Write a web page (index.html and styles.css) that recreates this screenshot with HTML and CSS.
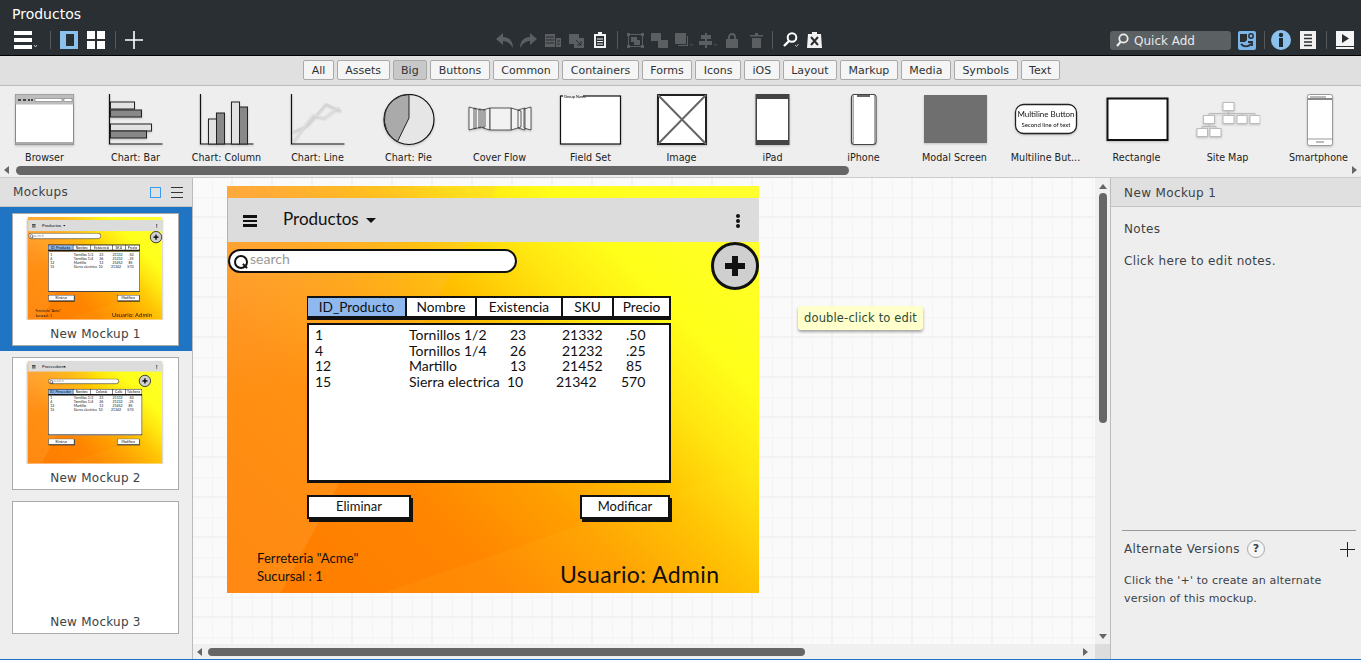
FILE: index.html
```html
<!DOCTYPE html>
<html lang="es">
<head>
    <meta charset="UTF-8">
    <title>Productos</title>
    <link rel="stylesheet" href="styles.css">
</head>
<body>
<div class="app">
    <header class="topbar">
        <div class="doc-title">Productos</div>
        <div class="tools">
            <div class="tool-group">
                <svg width="24" height="18" viewBox="0 0 24 18"><path d="M0 0h18v4H0zM0 7h18v4H0zM0 14h18v4H0z" fill="#fff"/><path d="M20 14l1.500 2 1.500-2" fill="none" stroke="#ddd" stroke-width=".8"/></svg>
                <i class="sep first"></i>
                <svg width="18" height="18" viewBox="0 0 18 18"><path d="M0 0h18v18H0z M6 3v12h8V3z" fill="#8cc1ee" fill-rule="evenodd"/></svg>
                <svg width="18" height="18" viewBox="0 0 18 18" class="grid-icon"><path d="M0 0h8v8H0zM10 0h8v8h-8zM0 10h8v8H0zM10 10h8v8h-8z" fill="#fff"/></svg>
                <i class="sep second"></i>
                <svg width="18" height="18" viewBox="0 0 18 18"><path d="M9 0v18M0 9h18" stroke="#fff" stroke-width="1.600"/></svg>
            </div>
            <div class="tool-mid">
                <svg width="24" height="15" viewBox="0 0 24 15"><path d="M7 0L0 6l7 6V8c4 0 7 2 10 7 0-6-3-11-10-11z" fill="#5b5f62"/></svg>
                <svg width="25" height="15" viewBox="0 0 25 15"><path d="M10 0l7 6-7 6V8c-4 0-7 2-10 7 0-6 3-11 10-11z" fill="#5b5f62"/></svg>
                <svg width="24" height="15" viewBox="0 0 24 15"><path d="M0 1h10v13H0zM11 5h5v9h-5z" fill="#5b5f62"/><path d="M1 4h8M1 7h8M1 10h8M12 8h3M12 11h3" stroke="#2a2f33"/></svg>
                <svg width="25" height="15" viewBox="0 0 25 15"><path d="M0 1h10v10H0zM5 5h10v10H5z" fill="#5b5f62"/><path d="M7 7l5 5M8 12h4V8" stroke="#2a2f33" fill="none"/></svg>
                <svg width="23" height="16" viewBox="0 0 23 16"><path d="M0 2h4V0h4v2h4v14H0z" fill="#f2f2f2"/><path d="M2 4h8v10H2z" fill="#2a2f33"/><path d="M3 7h6M3 9.500h6M3 12h6" stroke="#f2f2f2"/></svg>
                <i class="sep"></i>
                <svg width="24" height="15" viewBox="0 0 24 15"><path d="M1.500 1.500h14v12h-14z" fill="none" stroke="#5b5f62"/><path d="M0 0h3v3H0zM14 0h3v3h-3zM0 12h3v3H0zM14 12h3v3h-3z" fill="#5b5f62"/><path d="M4 4h6v3h3v5H7V9H4z" fill="#5b5f62"/></svg>
                <svg width="24" height="15" viewBox="0 0 24 15"><path d="M0 0h10v8H0zM7 7h10v8H7z" fill="#5b5f62"/></svg>
                <svg width="24" height="15" viewBox="0 0 24 15"><path d="M0 0h11v11H0z" fill="#5b5f62"/><path d="M12 3h1v10H3v-1h9z" fill="#5b5f62"/><path d="M15 11l1.500 1.500L18 11" stroke="#5b5f62" fill="none" stroke-width=".8"/></svg>
                <svg width="27" height="15" viewBox="0 0 27 15"><path d="M6 0h2v15H6zM2 2h10v4H2zM0 8h13v4H0z" fill="#5b5f62"/><path d="M15 11l1.500 1.500L18 11" stroke="#5b5f62" fill="none" stroke-width=".8"/></svg>
                <svg width="24" height="15" viewBox="0 0 24 15"><path d="M0 6h12v9H0z" fill="#5b5f62"/><path d="M3 6V4a3 3 0 0 1 6 0v2" fill="none" stroke="#5b5f62" stroke-width="1.800"/></svg>
                <svg width="22" height="15" viewBox="0 0 22 15"><path d="M0 2h13v1.500H0zM5 0h3v2H5zM2 5h9v10H2z" fill="#5b5f62"/></svg>
                <i class="sep wide"></i>
                <svg width="24" height="16" viewBox="0 0 24 16"><circle cx="9" cy="5.500" r="4.300" fill="none" stroke="#fff" stroke-width="2"/><path d="M6 9l-5 5" stroke="#fff" stroke-width="2.400"/><path d="M12 13l1.500 1.500L15.500 12" stroke="#ddd" fill="none" stroke-width=".8"/></svg>
                <svg width="15" height="16" viewBox="0 0 15 16"><path d="M1 2h4V0h5v2h4l1 14H0z" fill="#f2f2f2"/><path d="M4 5l7 8M11 5l-7 8" stroke="#2a2f33" stroke-width="2"/></svg>
            </div>
            <div class="tool-right">
                <div class="quick-add">
                    <svg width="13" height="14" viewBox="0 0 13 14"><circle cx="7.500" cy="5.500" r="4.200" fill="none" stroke="#eee" stroke-width="1.800"/><path d="M4.500 9L1 13" stroke="#eee" stroke-width="2"/></svg>
                    <span>Quick Add</span>
                </div>
                <svg width="18" height="19" viewBox="0 0 18 19"><rect width="18" height="19" rx="2" fill="#7ab6ea"/><path d="M2 3h7v6l-2 2H2z" fill="#2a2f33"/><circle cx="13" cy="5" r="2.200" fill="none" stroke="#2a2f33" stroke-width="1.500"/><path d="M3 13c3 3 7 3 10 0M10 11h4v4" stroke="#2a2f33" stroke-width="1.800" fill="none"/></svg>
                <i class="sep s-info"></i>
                <svg width="20" height="20" viewBox="0 0 20 20"><circle cx="10" cy="10" r="10" fill="#8cc1ee"/><path d="M8 8h4v9H8z" fill="#1f2a33"/><circle cx="10" cy="5" r="2.200" fill="#1f2a33"/></svg>
                <svg width="16" height="18" viewBox="0 0 16 18" class="doc-icon"><rect width="16" height="18" fill="#f2f2f2"/><path d="M4 4h8M4 7.500h8M4 11h8M4 14.500h8" stroke="#2a2f33" stroke-width="1.600"/></svg>
                <i class="sep s-play"></i>
                <svg width="18" height="18" viewBox="0 0 18 18"><path d="M0 0h18v15H0zM0 16h18v2H0z" fill="#f5f5f5"/><path d="M6 3l7 4.500-7 4.500z" fill="#2a2f33"/></svg>
            </div>
        </div>
    </header>

    <nav class="filters">
        <button class="filter">All</button>
        <button class="filter">Assets</button>
        <button class="filter active">Big</button>
        <button class="filter">Buttons</button>
        <button class="filter">Common</button>
        <button class="filter">Containers</button>
        <button class="filter">Forms</button>
        <button class="filter">Icons</button>
        <button class="filter">iOS</button>
        <button class="filter">Layout</button>
        <button class="filter">Markup</button>
        <button class="filter">Media</button>
        <button class="filter">Symbols</button>
        <button class="filter">Text</button>
    </nav>

    <section class="library">
        <div class="lib-items">
            <div class="lib-item">
                <svg width="64" height="54" viewBox="0 0 64 54"><rect x="2.500" y=".5" width="58" height="50" fill="#fff" stroke="#888"/><rect x="2.500" y=".5" width="58" height="10" fill="#bdbdbd"/><path d="M5 6h3M10 6h3M15 6h2M18 6h2" stroke="#444" stroke-width="2"/><rect x="22" y="4.500" width="27" height="3" fill="#fff" stroke="#666" stroke-width=".5"/><rect x="51" y="4.500" width="8" height="3" fill="#fff" stroke="#666" stroke-width=".5"/><rect x="2.500" y="48" width="58" height="2.500" fill="#aaa"/></svg>
                <span>Browser</span>
            </div>
            <div class="lib-item">
                <svg width="64" height="54" viewBox="0 0 64 54"><path d="M5.500 0v50h53" fill="none" stroke="#111" stroke-width="1.200"/><rect x="6.500" y="8" width="24" height="7" fill="#e2e2e2" stroke="#222"/><rect x="6.500" y="16" width="31" height="7" fill="#888" stroke="#222"/><rect x="6.500" y="30" width="41" height="7" fill="#e2e2e2" stroke="#222"/><rect x="6.500" y="37" width="36" height="7" fill="#888" stroke="#222"/></svg>
                <span>Chart: Bar</span>
            </div>
            <div class="lib-item">
                <svg width="64" height="54" viewBox="0 0 64 54"><path d="M5.500 0v50h53" fill="none" stroke="#111" stroke-width="1.200"/><rect x="13.500" y="25" width="8" height="25" fill="#e2e2e2" stroke="#222"/><rect x="21.500" y="19" width="8" height="31" fill="#888" stroke="#222"/><rect x="36.500" y="8" width="8" height="42" fill="#e2e2e2" stroke="#222"/><rect x="44.500" y="13" width="8" height="37" fill="#888" stroke="#222"/></svg>
                <span>Chart: Column</span>
            </div>
            <div class="lib-item">
                <svg width="64" height="54" viewBox="0 0 64 54"><path d="M5.500 0v50h53" fill="none" stroke="#111" stroke-width="1.200"/><path d="M7 38l15-7L40 10l15 7" fill="none" stroke="#d4d4d4" stroke-width="1.500"/><path d="M7 48l20-27 11 3 15-11" fill="none" stroke="#dedede" stroke-width="1.500"/></svg>
                <span>Chart: Line</span>
            </div>
            <div class="lib-item">
                <svg width="64" height="54" viewBox="0 0 64 54"><circle cx="32" cy="25.500" r="25" fill="#e6e6e6" stroke="#111" stroke-width="1.200"/><path d="M32 .5A25 25 0 0 0 20.500 47.500L32 24z" fill="#aaa" stroke="#222"/></svg>
                <span>Chart: Pie</span>
            </div>
            <div class="lib-item">
                <svg width="64" height="54" viewBox="0 0 64 54" fill="#f2f2f2" stroke="#333" stroke-width=".8"><path d="M1 13l7 2v19l-7 2zM6 14l7 2v17l-7 2zM11 15l6 1v17l-6 1zM15 16l7-2v22l-7-2zM43 14l10 3v16l-10 3zM50 16l7-2v22l-7-2zM56 15l7-2v23l-7-2z"/><path d="M22 14h21v22H22z"/></svg>
                <span>Cover Flow</span>
            </div>
            <div class="lib-item">
                <svg width="64" height="54" viewBox="0 0 64 54"><rect x="1.500" y="2" width="60" height="48" fill="#fff" stroke="#111" stroke-width="1.200"/><rect x="4" y="0" width="20" height="4" fill="#eee"/><text x="5" y="4" class="sk" font-size="4">Group Name</text></svg>
                <span>Field Set</span>
            </div>
            <div class="lib-item">
                <svg width="64" height="54" viewBox="0 0 64 54"><rect x="8" y="1" width="48" height="49" fill="#fff" stroke="#222" stroke-width="2"/><path d="M8 1l48 49M56 1L8 50" stroke="#666" stroke-width="2"/></svg>
                <span>Image</span>
            </div>
            <div class="lib-item">
                <svg width="64" height="54" viewBox="0 0 64 54"><rect x="14.500" y="0" width="34" height="51" fill="#444"/><rect x="16" y="5" width="31" height="41" fill="#fff"/></svg>
                <span>iPad</span>
            </div>
            <div class="lib-item">
                <svg width="64" height="54" viewBox="0 0 64 54"><rect x="19.500" y=".5" width="24.500" height="50" rx="3" fill="#fff" stroke="#444" stroke-width="1.200"/><rect x="20.500" y="2" width="1.500" height="47" fill="#aaa"/><rect x="42" y="2" width="1.500" height="47" fill="#aaa"/><path d="M25 2h13" stroke="#666" stroke-width="2"/></svg>
                <span>iPhone</span>
            </div>
            <div class="lib-item">
                <svg width="64" height="54" viewBox="0 0 64 54"><rect x="1" y="1" width="63" height="48" fill="#6f6f6f"/></svg>
                <span>Modal Screen</span>
            </div>
            <div class="lib-item">
                <svg width="64" height="54" viewBox="0 0 64 54"><rect x="1.500" y="10.500" width="61" height="29" rx="8" fill="#fff" stroke="#222" stroke-width="1.300"/><text x="32" y="23" font-size="8" text-anchor="middle" class="sk">Multiline Button</text><text x="32" y="33" font-size="6" text-anchor="middle" class="sk">Second line of text</text></svg>
                <span>Multiline But...</span>
            </div>
            <div class="lib-item">
                <svg width="64" height="54" viewBox="0 0 64 54"><rect x="2.500" y="4.500" width="60" height="41.500" fill="#fff" stroke="#111" stroke-width="2"/></svg>
                <span>Rectangle</span>
            </div>
            <div class="lib-item">
                <svg width="64" height="54" viewBox="0 0 64 54" fill="#fff" stroke="#bbb"><path d="M32.500 17v2M13 19.500h46M13 19.500v2M32.500 19.500v2M46 19.500v2M59 19.500v2M13 30v2M6 32.500h14M6 32.500v2M20 32.500v2" fill="none"/><rect x="27" y="8.500" width="11" height="8"/><rect x="7.500" y="21.500" width="11" height="8"/><rect x="27" y="21.500" width="11" height="8"/><rect x="41" y="21.500" width="10" height="8"/><rect x="54" y="21.500" width="10" height="8"/><rect x="1" y="34.500" width="10.500" height="8"/><rect x="14" y="34.500" width="11" height="8"/></svg>
                <span>Site Map</span>
            </div>
            <div class="lib-item">
                <svg width="64" height="54" viewBox="0 0 64 54"><rect x="20.500" y=".5" width="25" height="51" rx="2" fill="#fff" stroke="#999"/><path d="M21 5h24" stroke="#555" stroke-width="1.400"/><path d="M21 45h24" stroke="#999"/><path d="M23 3h16M29 48h8" stroke="#777"/></svg>
                <span>Smartphone</span>
            </div>
        </div>
        <div class="lib-scroll">
            <i class="arr-l"></i>
            <div class="track"><div class="thumb-h"></div></div>
            <i class="arr-r"></i>
        </div>
    </section>

    <main class="workspace">
        <aside class="mockups">
            <div class="panel-head">
                <span>Mockups</span>
                <span class="head-icons">
                    <svg width="11" height="12" viewBox="0 0 11 12"><rect x=".5" y="1.500" width="10" height="10" fill="none" stroke="#3a9bf0"/></svg>
                    <svg width="12" height="13" viewBox="0 0 12 13"><path d="M0 1.500h12M0 6.500h12M0 11.500h12" stroke="#333"/></svg>
                </span>
            </div>
            <div class="mock-row selected">
                <div class="mock-card">
                    <div class="mini">
                        <div class="mock-page">
                            <div class="mp-bar"><span class="mp-burger"></span><span class="mp-title">Productos</span><span class="mp-caret"></span><span class="mp-dots"></span></div>
                            <div class="mp-search"><span>search</span></div>
                            <div class="mp-add"></div>
                            <div class="mp-tabs"><span class="on t1">ID_Producto</span><span class="t2">Nombre</span><span class="t3">Existencia</span><span class="t4">SKU</span><span class="t5">Precio</span></div>
                            <div class="mp-table">
                                <div class="row"><span class="c1">1</span><span class="c2">Tornillos 1/2</span><span class="c3">23</span><span class="c4">21332</span><span class="c5">.50</span></div>
                                <div class="row"><span class="c1">4</span><span class="c2">Tornillos 1/4</span><span class="c3">26</span><span class="c4">21232</span><span class="c5">.25</span></div>
                                <div class="row"><span class="c1">12</span><span class="c2">Martillo</span><span class="c3">13</span><span class="c4">21452</span><span class="c5">85</span></div>
                                <div class="row"><span class="c1">15</span><span class="c2">Sierra electrica</span><span class="c3 in">10</span><span class="c4 in">21342</span><span class="c5 in">570</span></div>
                            </div>
                            <div class="mp-btn left">Eliminar</div>
                            <div class="mp-btn right">Modificar</div>
                            <div class="mp-foot">Ferreteria "Acme"<br>Sucursal : 1</div>
                            <div class="mp-user">Usuario: Admin</div>
                        </div>
                    </div>
                    <p>New Mockup 1</p>
                </div>
            </div>
            <div class="mock-row">
                <div class="mock-card">
                    <div class="mini">
                        <div class="mock-page second">
                            <div class="mp-bar"><span class="mp-burger"></span><span class="mp-title">Proveedores</span><span class="mp-caret"></span><span class="mp-dots"></span></div>
                            <div class="mp-search"><span>search</span></div>
                            <div class="mp-add"></div>
                            <div class="mp-tabs"><span class="on t1">ID_Proveedor</span><span class="t2">Nombre</span><span class="t3">Colonia</span><span class="t4">Calle</span><span class="t5">Telefono</span></div>
                            <div class="mp-table">
                                <div class="row"><span class="c1">1</span><span class="c2">Tornillos 1/2</span><span class="c3">23</span><span class="c4">21332</span><span class="c5">.50</span></div>
                                <div class="row"><span class="c1">4</span><span class="c2">Tornillos 1/4</span><span class="c3">26</span><span class="c4">21232</span><span class="c5">.25</span></div>
                                <div class="row"><span class="c1">12</span><span class="c2">Martillo</span><span class="c3">13</span><span class="c4">21452</span><span class="c5">85</span></div>
                                <div class="row"><span class="c1">15</span><span class="c2">Sierra electrica</span><span class="c3 in">10</span><span class="c4 in">21342</span><span class="c5 in">570</span></div>
                            </div>
                            <div class="mp-btn left">Eliminar</div>
                            <div class="mp-btn right">Modificar</div>
                        </div>
                    </div>
                    <p>New Mockup 2</p>
                </div>
            </div>
            <div class="mock-row">
                <div class="mock-card">
                    <div class="mini"></div>
                    <p>New Mockup 3</p>
                </div>
            </div>
        </aside>

        <section class="canvas-wrap">
            <div class="canvas">
                <div class="mock-page main">
                    <div class="mp-bar">
                        <span class="mp-burger"></span><span class="mp-title">Productos</span><span class="mp-caret"></span><span class="mp-dots"></span>
                    </div>
                    <div class="mp-search"><span>search</span></div>
                    <div class="mp-add"></div>
                    <div class="mp-tabs"><span class="on t1">ID_Producto</span><span class="t2">Nombre</span><span class="t3">Existencia</span><span class="t4">SKU</span><span class="t5">Precio</span></div>
                    <div class="mp-table">
                        <div class="row"><span class="c1">1</span><span class="c2">Tornillos 1/2</span><span class="c3">23</span><span class="c4">21332</span><span class="c5">.50</span></div>
                        <div class="row"><span class="c1">4</span><span class="c2">Tornillos 1/4</span><span class="c3">26</span><span class="c4">21232</span><span class="c5">.25</span></div>
                        <div class="row"><span class="c1">12</span><span class="c2">Martillo</span><span class="c3">13</span><span class="c4">21452</span><span class="c5">85</span></div>
                        <div class="row"><span class="c1">15</span><span class="c2">Sierra electrica</span><span class="c3 in">10</span><span class="c4 in">21342</span><span class="c5 in">570</span></div>
                    </div>
                    <div class="mp-btn left">Eliminar</div>
                    <div class="mp-btn right">Modificar</div>
                    <div class="mp-foot">Ferreteria "Acme"<br>Sucursal : 1</div>
                    <div class="mp-user">Usuario: Admin</div>
                </div>
                <div class="tip">double-click to edit</div>
            </div>
            <div class="v-scroll"><i class="arr-u"></i><div class="thumb-v"></div><i class="arr-d"></i></div>
            <div class="h-scroll"><i class="arr-l"></i><div class="track"><div class="thumb-h2"></div></div><i class="arr-r"></i></div>
            <div class="corner"></div>
        </section>

        <aside class="props">
            <div class="panel-head">New Mockup 1</div>
            <div class="notes">
                <h4>Notes</h4>
                <p>Click here to edit notes.</p>
            </div>
            <div class="alternates">
                <div class="alt-head">
                    <span>Alternate Versions</span>
                    <span class="help">?</span>
                    <svg width="15" height="15" viewBox="0 0 15 15"><path d="M7.500 0v15M0 7.500h15" stroke="#222"/></svg>
                </div>
                <p>Click the '+' to create an alternate version of this mockup.</p>
            </div>
        </aside>
    </main>
</div>
</body>
</html>
```

FILE: styles.css
```css
* {
    box-sizing: border-box;
}
html, body {
    margin: 0;
    height: 100%;
    overflow: hidden;
}
body {
    font-family: "DejaVu Sans", sans-serif;
    font-size: 12px;
    color: #2f3336;
    background: #eee;
}
.app {
    height: 660px;
    display: flex;
    flex-direction: column;
    border-bottom: 1px solid #1f74c4;
}

/* top bar */
.topbar {
    height: 56px;
    background: #2a2f33;
    border-bottom: 1px solid #000;
    padding: 6px 7px 0 14px;
    color: #fff;
}
.doc-title {
    font-size: 14px;
    line-height: 17px;
    margin-left: -2px;
}
.tools {
    display: flex;
    align-items: center;
    margin-top: 6px;
    height: 22px;
}
.tool-group, .tool-mid, .tool-right {
    display: flex;
    align-items: center;
}
.tools svg {
    flex: none;
    display: block;
}
.sep {
    display: block;
    flex: none;
    width: 1px;
    height: 18px;
    background: #55595c;
}
.tool-group .first {
    margin: 0 9px 0 12px;
}
.tool-group .grid-icon {
    margin-left: 9px;
}
.tool-group .second {
    margin: 0 9px 0 10px;
}
.tool-mid {
    margin-left: 353px;
}
.tool-mid .sep {
    margin-right: 9px;
}
.tool-mid .sep.wide {
    margin-right: 10px;
}
.tool-right {
    margin-left: auto;
}
.quick-add {
    width: 121px;
    height: 19px;
    margin-right: 7px;
    background: #5b6063;
    border-radius: 3px;
    display: flex;
    align-items: center;
    gap: 5px;
    padding-left: 6px;
    color: #e8e8e8;
    font-size: 12px;
}
.quick-add span {
    padding-top: 1px;
}
.s-info {
    margin: 0 6px 0 8px;
}
.doc-icon {
    margin-left: 9px;
}
.s-play {
    margin: 0 9px 0 10px;
}

/* filter row */
.filters {
    height: 30px;
    background: #e0e0e0;
    border-bottom: 1px solid #bbb;
    display: flex;
    justify-content: center;
    gap: 3px;
    padding-top: 4px;
    padding-left: 2px;
}
.filter {
    height: 20px;
    padding: 0 7.500px;
    font-family: inherit;
    font-size: 11px;
    color: #2f3336;
    background: #f5f5f5;
    border: 1px solid #aaa;
    border-radius: 2px;
}
.filter.active {
    background: #c8c8c8;
}

/* library */
.library {
    height: 92px;
    background: #eee;
    border-bottom: 1px solid #ccc;
}
.lib-items {
    display: flex;
    height: 78px;
    padding-top: 8px;
    margin-left: -1px;
    overflow: hidden;
}
.lib-item {
    flex: 0 0 91px;
    display: flex;
    flex-direction: column;
    align-items: center;
}
.lib-item svg {
    flex: none;
    filter: drop-shadow(0 1px 1px rgba(0,0,0,.2));
}
.lib-item span {
    font-size: 9.600px;
    line-height: 12px;
    margin-top: 4px;
    color: #222;
    white-space: nowrap;
}
.sk {
    font-family: Lato, sans-serif;
    fill: #111;
    stroke: none;
}
.lib-scroll, .h-scroll {
    display: flex;
    align-items: center;
    padding: 0 4px;
}
.lib-scroll {
    height: 12px;
    gap: 7px;
}
.track {
    flex: 1;
}
.thumb-h {
    width: 833px;
    height: 9px;
    background: #666;
    border-radius: 5px;
}
.arr-l, .arr-r, .arr-u, .arr-d {
    display: block;
    width: 0;
    height: 0;
    border: 4px solid transparent;
}
.arr-l {
    border-left: 0;
    border-right: 5px solid #666;
}
.arr-r {
    border-right: 0;
    border-left: 5px solid #666;
}
.arr-u {
    border-top: 0;
    border-bottom: 5px solid #666;
}
.arr-d {
    border-bottom: 0;
    border-top: 5px solid #666;
}

/* main area */
.workspace {
    flex: 1;
    display: flex;
    min-height: 0;
}
.panel-head {
    height: 29px;
    background: #e0e0e0;
    border-bottom: 1px solid #c4c4c4;
    display: flex;
    align-items: center;
    justify-content: space-between;
    padding: 1px 9px 0 13px;
    font-size: 12px;
    letter-spacing: .4px;
    color: #3c4246;
}
.head-icons {
    display: flex;
    align-items: center;
    gap: 10px;
}
.mockups {
    width: 193px;
    background: #eee;
    border-right: 1px solid #bbb;
    overflow: hidden;
}
.mockups .panel-head {
    padding-top: 0;
}
.mock-row {
    height: 144px;
    padding: 6px 13px 6px 12px;
}
.mock-row.selected {
    background: #1f74c4;
}
.mock-card {
    height: 133px;
    background: #fff;
    border: 1px solid #aaa;
    text-align: center;
    position: relative;
}
.mock-card p {
    margin: 0;
    position: absolute;
    left: 0;
    right: 0;
    bottom: 3px;
    font-size: 12px;
    line-height: 16px;
    letter-spacing: .25px;
    color: #3c4246;
}
.mini {
    height: 106px;
    position: relative;
    overflow: hidden;
}

/* canvas */
.canvas-wrap {
    flex: 1;
    display: grid;
    grid-template-columns: 1fr 15px;
    grid-template-rows: 1fr 15px;
    border-right: 1px solid #bbb;
    min-width: 0;
}
.canvas {
    position: relative;
    overflow: hidden;
    background-color: #fafafa;
    background-image:
        linear-gradient(#f2f2f2 2px, transparent 2px),
        linear-gradient(90deg, #f2f2f2 2px, transparent 2px),
        linear-gradient(#f4f4f4 1px, transparent 1px),
        linear-gradient(90deg, #f4f4f4 1px, transparent 1px);
    background-size: 40px 40px, 40px 40px, 20px 20px, 20px 20px;
    background-position: 0 38px, 38px 0, 0 19px, 19px 0;
}
.v-scroll {
    background: #f0f0f0;
    display: flex;
    flex-direction: column;
    align-items: center;
    padding-top: 6px;
}
.thumb-v {
    width: 8px;
    height: 230px;
    margin-top: 4px;
    background: #666;
    border-radius: 4px;
}
.v-scroll .arr-d {
    margin-top: auto;
    margin-bottom: 5px;
}
.h-scroll {
    height: 15px;
    background: #f0f0f0;
    gap: 6px;
    padding-right: 7px;
}
.thumb-h2 {
    width: 597px;
    height: 8px;
    background: #666;
    border-radius: 4px;
}
.corner {
    background: #ddd;
}
.tip {
    position: absolute;
    left: 605px;
    top: 128px;
    width: 125px;
    height: 24px;
    line-height: 25px;
    padding-left: 6px;
    background: #ffffcc;
    border-radius: 3px;
    box-shadow: 0 2px 3px rgba(0,0,0,.35);
    font-size: 11.500px;
    letter-spacing: .15px;
    color: #2c4a3a;
    white-space: nowrap;
}

/* the wireframe itself */
.mock-page {
    width: 532px;
    height: 407px;
    position: relative;
    font-family: Lato, sans-serif;
    color: #111;
    text-align: left;
    background:
        linear-gradient(161deg, transparent 0 78%, rgba(255,240,60,.06) 78.200%),
        linear-gradient(118deg, rgba(255,190,90,.2) 0 36%, transparent 36.200%),
        radial-gradient(circle at 0 0, rgba(255,170,100,.55), transparent 32%),
        linear-gradient(45deg, #ff7b00 0%, #ff8500 30%, #ffa000 45%, #ffc000 57%, #ffe610 68%, #ffff1a 78%, #ffff30 100%);
}
.mock-page.main {
    position: absolute;
    left: 34px;
    top: 8px;
}
.mini .mock-page {
    position: absolute;
    left: 15px;
    top: 3px;
    transform: scale(.252);
    transform-origin: 0 0;
    box-shadow: 0 6px 10px rgba(0,0,0,.5);
}
.mp-bar {
    position: absolute;
    left: 1px;
    right: 0;
    top: 12px;
    height: 44px;
    background: #dcdcdc;
}
.mp-burger {
    position: absolute;
    left: 15px;
    top: 17px;
    width: 14px;
    height: 12px;
    border-top: 3px solid #111;
    border-bottom: 3px solid #111;
}
.mp-burger::after {
    content: "";
    display: block;
    height: 2px;
    margin-top: 2px;
    background: #111;
}
.mp-title {
    position: absolute;
    left: 55px;
    top: 11px;
    font-size: 17px;
    line-height: 20px;
    white-space: nowrap;
}
.mp-caret {
    position: absolute;
    left: 138px;
    top: 20px;
    border: 5px solid transparent;
    border-top: 5px solid #111;
    border-bottom: 0;
}
.mp-dots {
    position: absolute;
    right: 19px;
    top: 16px;
    width: 4px;
    height: 4px;
    background: #111;
    border-radius: 2px;
    box-shadow: 0 5px #111, 0 10px #111;
}
.mp-search {
    position: absolute;
    left: 1px;
    top: 63px;
    width: 289px;
    height: 24px;
    background: #fff;
    border: 2px solid #111;
    border-radius: 12px;
    padding-left: 20px;
    font-size: 14px;
    line-height: 16px;
    color: #999;
}
.mp-search::before {
    content: "";
    position: absolute;
    left: 4px;
    top: 4px;
    width: 10px;
    height: 10px;
    border: 2px solid #111;
    border-radius: 50%;
}
.mp-search::after {
    content: "";
    position: absolute;
    left: 12px;
    top: 14px;
    width: 6px;
    height: 2px;
    background: #111;
    transform: rotate(45deg);
}
.mp-add {
    position: absolute;
    left: 484px;
    top: 56px;
    width: 48px;
    height: 48px;
    border: 3px solid #111;
    border-radius: 50%;
    background:
        linear-gradient(#111, #111) center / 20px 6px no-repeat,
        linear-gradient(#111, #111) center / 6px 20px no-repeat,
        #cfcfcf;
}
.mp-tabs {
    position: absolute;
    left: 80px;
    top: 110px;
    width: 364px;
    height: 24px;
    display: flex;
    background: #111;
    border: solid #111;
    border-width: 2px 2px 4px 1px;
    gap: 2px;
    font-size: 13.700px;
}
.mp-tabs span {
    background: #fff;
    text-align: center;
    line-height: 18px;
    white-space: nowrap;
    overflow: hidden;
}
.mp-tabs .on {
    background: #8fb8ef;
}
.t1 { width: 97px; }
.t2 { width: 68px; }
.t3 { width: 84px; }
.t4 { width: 49px; }
.t5 { width: 55px; }
.mp-table {
    position: absolute;
    left: 80px;
    top: 137px;
    width: 364px;
    height: 160px;
    background: #fff;
    border: 2px solid #111;
    border-bottom-width: 3px;
    padding-top: 2px;
    font-size: 14px;
}
.row {
    display: flex;
    height: 15.700px;
    line-height: 16px;
    white-space: nowrap;
}
.c1 { width: 100px; padding-left: 6px; }
.c2 { width: 101px; }
.c3 { width: 52px; }
.c4 { width: 64px; }
.c5 { width: 40px; }
.c3.in { margin-left: -3px; }
.c4.in { margin-left: -3px; }
.c5.in { margin-left: 1px; }
.mp-btn {
    position: absolute;
    top: 309px;
    height: 24px;
    background: #fff;
    border: 2px solid #111;
    box-shadow: 2px 3px 0 #111;
    text-align: center;
    font-size: 13px;
    line-height: 19px;
}
.mp-btn.left {
    left: 80px;
    width: 104px;
}
.mp-btn.right {
    left: 353px;
    width: 90px;
}
.mp-foot {
    position: absolute;
    left: 30px;
    top: 363px;
    font-size: 13.200px;
    line-height: 18px;
    white-space: nowrap;
}
.mp-user {
    position: absolute;
    left: 333px;
    top: 374px;
    font-size: 23px;
    line-height: 28px;
    letter-spacing: .4px;
    white-space: nowrap;
}

/* second thumbnail has its own layout */
.second .mp-bar { top: 0; height: 42px; }
.second .mp-search { left: 80px; top: 70px; width: 281px; height: 21px; }
.second .mp-add { left: 440px; top: 55px; }
.second .mp-tabs { top: 111px; width: 373px; }
.second .mp-table { top: 135px; width: 373px; }
.second .t5 { width: 64px; }
.second .mp-btn { top: 308px; }

/* properties */
.props {
    width: 250px;
    background: #eee;
    display: flex;
    flex-direction: column;
    font-size: 12px;
    letter-spacing: .35px;
    color: #3c4246;
}
.notes {
    flex: 1;
    padding: 14px 13px;
}
.notes h4 {
    margin: 0;
    font-weight: normal;
    font-size: 12px;
    line-height: 16px;
}
.notes p {
    margin: 16px 0 0;
    line-height: 16px;
}
.alternates {
    margin: 0 5px 0 11px;
    height: 129px;
    border-top: 1px solid #999;
    padding: 9px 0 0 2px;
}
.alt-head {
    display: flex;
    align-items: center;
    height: 18px;
}
.help {
    width: 18px;
    height: 18px;
    margin-left: 7px;
    border: 1px solid #aaa;
    border-radius: 50%;
    background: #f5f5f5;
    font-size: 11px;
    font-weight: bold;
    line-height: 16px;
    letter-spacing: 0;
    text-align: center;
}
.alt-head svg {
    margin-left: auto;
    margin-right: 1px;
}
.alternates p {
    margin: 14px 0 0;
    font-size: 11px;
    line-height: 18px;
    letter-spacing: .2px;
}
```
